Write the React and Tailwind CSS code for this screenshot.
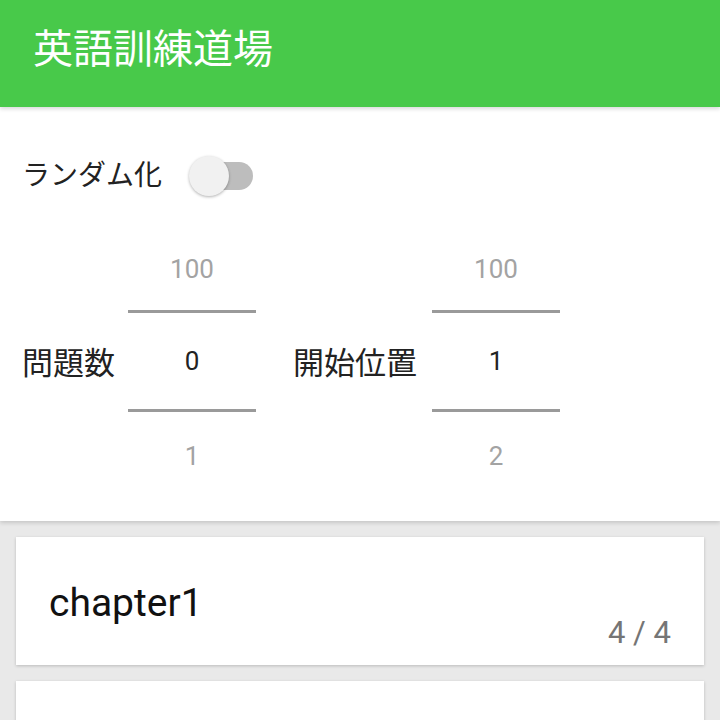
import React from 'react';

const jp = { fontFamily: 'Roboto, "Noto Sans CJK JP", sans-serif' };

function Picker({ top, value, bottom }) {
  return (
    <div className="w-[128px] flex flex-col items-center">
      <div className="h-[82px] w-full flex items-center justify-center text-[26px] text-[#a3a3a3]">
        {top}
      </div>
      <div className="h-[3px] w-full bg-[#9a9a9a]" />
      <div className="h-[96px] w-full flex items-center justify-center text-[26px] text-[#222]">
        {value}
      </div>
      <div className="h-[3px] w-full bg-[#9a9a9a]" />
      <div className="h-[88px] w-full flex items-center justify-center text-[26px] text-[#a3a3a3]">
        {bottom}
      </div>
    </div>
  );
}

function ChapterCard({ title, count }) {
  return (
    <div className="h-[128px] bg-white shadow-[0_1px_3px_rgba(0,0,0,0.2)] flex justify-between px-[33px] shrink-0">
      <div className="pt-[46px] text-[39px] leading-[40px] text-[#111]">{title}</div>
      <div className="self-end pb-[14px] text-[31px] leading-[36px] text-[#757575]">{count}</div>
    </div>
  );
}

export default function App() {
  return (
    <div className="w-[720px] h-[720px] overflow-hidden bg-[#e9e9e9] flex flex-col" style={jp}>
      {/* App bar */}
      <div className="h-[107px] shrink-0 bg-[#48c94a] flex items-center px-[33px] shadow-[0_2px_4px_rgba(0,0,0,0.15)] relative z-10">
        <h1 className="text-[40px] text-white leading-none -mt-[7px]">英語訓練道場</h1>
      </div>

      {/* Settings panel */}
      <div className="shrink-0 bg-white pt-[49px] pb-[21px] pl-[22px] shadow-[0_2px_4px_rgba(0,0,0,0.15)]">
        <div className="h-[40px] flex items-center">
          <span className="text-[28px] text-[#222]">ランダム化</span>
          <div className="ml-[27px] relative w-[64px] h-[40px] flex items-center">
            <div className="ml-[5px] w-[59px] h-[28px] rounded-full bg-[#bdbdbd]" />
            <div className="absolute left-0 top-0 w-[40px] h-[40px] rounded-full bg-[#f1f1f1] shadow-[0_1px_3px_rgba(0,0,0,0.3)]" />
          </div>
        </div>

        <div className="mt-[32px] flex items-center">
          <div className="w-[106px] text-[31px] text-[#222]">問題数</div>
          <Picker top="100" value="0" bottom="1" />
          <div className="ml-[37px] w-[139px] text-[31px] text-[#222]">開始位置</div>
          <Picker top="100" value="1" bottom="2" />
        </div>
      </div>

      {/* Chapters */}
      <div className="flex flex-col gap-[16px] px-[16px] pt-[16px]">
        <ChapterCard title="chapter1" count="4 / 4" />
        <div className="h-[128px] bg-white shadow-[0_1px_3px_rgba(0,0,0,0.2)] shrink-0" />
      </div>
    </div>
  );
}
